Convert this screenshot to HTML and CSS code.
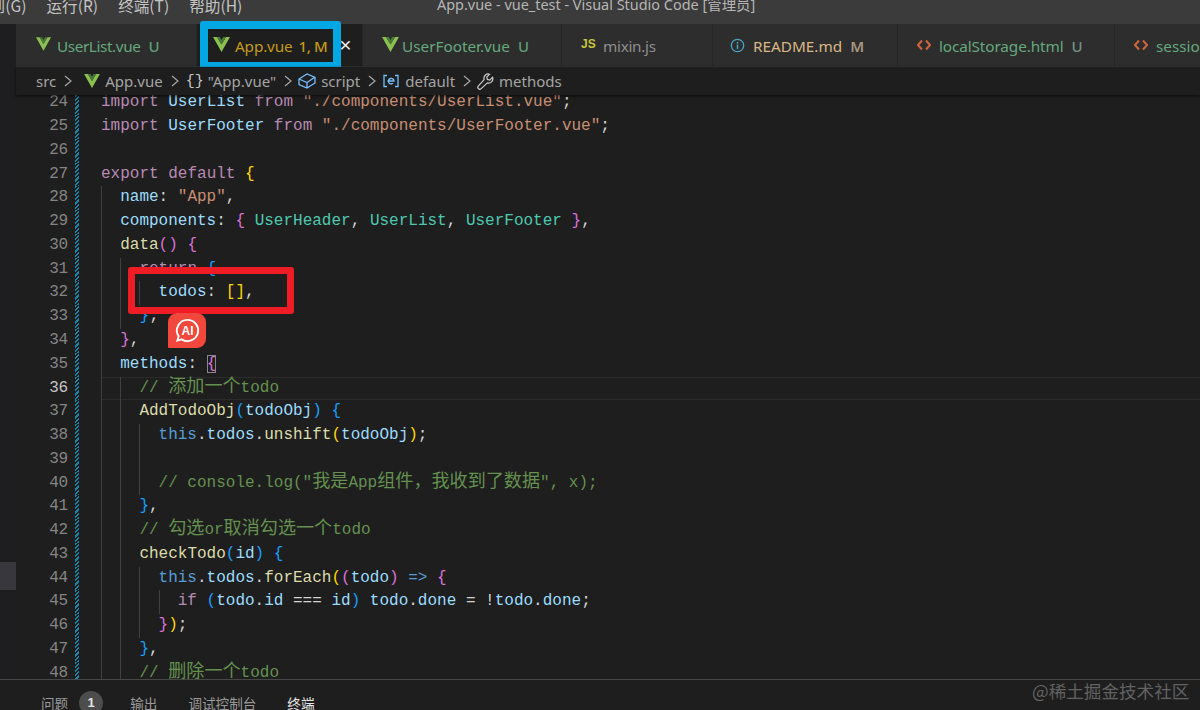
FILE: index.html
```html
<!DOCTYPE html>
<html lang="zh-CN">
<head>
<meta charset="utf-8">
<title>App.vue - vue_test</title>
<link rel="stylesheet" href="styles.css">
</head>
<body>
<svg class="defs" width="0" height="0" aria-hidden="true"><defs>
<symbol id="vue" viewBox="0 0 18 16"><path d="M0 0h4.2L9 8l4.8-8H18L9 16z" fill="#8cc152"/><path d="M4.2 0h3L9 3.2 10.8 0h3L9 8z" fill="#4c7a3a"/></symbol>
</defs></svg>
<header class="titlebar">
  <nav class="menu"><span>转到(G)</span><span>运行(R)</span><span>终端(T)</span><span>帮助(H)</span></nav>
  <div class="wintitle">App.vue - vue_test - Visual Studio Code [管理员]</div>
</header>
<div class="workbench">
  <aside class="activity"><div class="activity-item"></div></aside>
  <div class="center">
    <div class="tabs">
      <div class="tab t1"><svg class="ic-vue"><use href="#vue"/></svg><span class="lb green">UserList.vue</span><span class="st green-d">U</span></div>
      <div class="tab t2 active"><svg class="ic-vue"><use href="#vue"/></svg><span class="lb amber">App.vue</span><span class="st amber">1, M</span><span class="close">×</span></div>
      <div class="tab t3"><svg class="ic-vue"><use href="#vue"/></svg><span class="lb green">UserFooter.vue</span><span class="st green-d">U</span></div>
      <div class="tab t4"><span class="ic-js">JS</span><span class="lb grey">mixin.js</span></div>
      <div class="tab t5"><svg class="ic-info" viewBox="0 0 16 16"><circle cx="8" cy="8" r="6.6" fill="none" stroke="#4aa3c7" stroke-width="1.4"/><path d="M8 4.2v1.6M8 7v4.8" stroke="#4aa3c7" stroke-width="1.6"/></svg><span class="lb tan">README.md</span><span class="st tan-d">M</span></div>
      <div class="tab t6"><svg class="ic-code" viewBox="0 0 14 12"><path d="M5 1.5 1 6l4 4.5M9 1.5 13 6l-4 4.5" fill="none" stroke="#d0643a" stroke-width="2"/></svg><span class="lb green">localStorage.html</span><span class="st green-g">U</span></div>
      <div class="tab t7"><svg class="ic-code" viewBox="0 0 14 12"><path d="M5 1.5 1 6l4 4.5M9 1.5 13 6l-4 4.5" fill="none" stroke="#d0643a" stroke-width="2"/></svg><span class="lb green">sessionStorage.html</span></div>
    </div>
    <div class="crumbs">
      <span>src</span><svg class="chev" viewBox="0 0 8 12"><path d="M1 1l6 5-6 5" fill="none" stroke="#a8a8a8" stroke-width="1.2"/></svg>
      <svg class="ic-vue cv"><use href="#vue"/></svg><span>App.vue</span><svg class="chev" viewBox="0 0 8 12"><path d="M1 1l6 5-6 5" fill="none" stroke="#a8a8a8" stroke-width="1.2"/></svg>
      <span class="braces">{}</span><span>"App.vue"</span><svg class="chev" viewBox="0 0 8 12"><path d="M1 1l6 5-6 5" fill="none" stroke="#a8a8a8" stroke-width="1.2"/></svg>
      <svg class="ic-cube" viewBox="0 0 18 16"><path d="M1 6l8-5 8 3.500v5.500l-8 5-8-3.500zM1 6l8 3.500 8-5.500M9 9.500V15" fill="none" stroke="#75beff" stroke-width="1.300"/></svg><span>script</span><svg class="chev" viewBox="0 0 8 12"><path d="M1 1l6 5-6 5" fill="none" stroke="#a8a8a8" stroke-width="1.2"/></svg>
      <svg class="ic-var" viewBox="0 0 16 14"><path d="M4 1.500H1v11h3M12 1.500h3v11h-3" fill="none" stroke="#75beff" stroke-width="1.300"/><path d="M4.500 7h6.500a2.800 2.800 0 1 0-1 2.300" fill="none" stroke="#75beff" stroke-width="1.400"/></svg><span>default</span><svg class="chev" viewBox="0 0 8 12"><path d="M1 1l6 5-6 5" fill="none" stroke="#a8a8a8" stroke-width="1.2"/></svg>
      <svg class="ic-wrench" viewBox="0 0 18 18"><path d="M16.500 4.500l-3 3-2.500-.7-.7-2.500 3-3a4.500 4.500 0 0 0-5.700 5.700L1.500 13.600a2 2 0 0 0 2.900 2.900l6.600-6.100a4.500 4.500 0 0 0 5.500-5.900z" fill="none" stroke="#c8c8c8" stroke-width="1.300"/></svg><span>methods</span>
    </div>
    <main class="editor">
      <div class="lines">
        <div class="line"><span class="num">24</span><span class="diff"></span><code class="code"><span class="k">import</span> <span class="v">UserList</span> <span class="k">from</span> <span class="s">"./components/UserList.vue"</span><span class="p">;</span></code></div>
        <div class="line"><span class="num">25</span><span class="diff"></span><code class="code"><span class="k">import</span> <span class="v">UserFooter</span> <span class="k">from</span> <span class="s">"./components/UserFooter.vue"</span><span class="p">;</span></code></div>
        <div class="line"><span class="num">26</span><span class="diff"></span><code class="code"></code></div>
        <div class="line"><span class="num">27</span><span class="diff"></span><code class="code"><span class="k">export</span> <span class="k">default</span> <span class="by">{</span></code></div>
        <div class="line"><span class="num">28</span><span class="diff"></span><code class="code"><i class="g"></i><span class="v">name</span><span class="p">:</span> <span class="s">"App"</span><span class="p">,</span></code></div>
        <div class="line"><span class="num">29</span><span class="diff"></span><code class="code"><i class="g"></i><span class="v">components</span><span class="p">:</span> <span class="bp">{</span> <span class="c">UserHeader</span><span class="p">,</span> <span class="c">UserList</span><span class="p">,</span> <span class="c">UserFooter</span> <span class="bp">}</span><span class="p">,</span></code></div>
        <div class="line"><span class="num">30</span><span class="diff"></span><code class="code"><i class="g"></i><span class="f">data</span><span class="bp">()</span> <span class="bp">{</span></code></div>
        <div class="line"><span class="num">31</span><span class="diff"></span><code class="code"><i class="g"></i><i class="g"></i><span class="k">return</span> <span class="bb">{</span></code></div>
        <div class="line"><span class="num">32</span><span class="diff"></span><code class="code"><i class="g"></i><i class="g"></i><i class="g"></i><span class="v">todos</span><span class="p">:</span> <span class="by">[]</span><span class="p">,</span></code></div>
        <div class="line"><span class="num">33</span><span class="diff"></span><code class="code"><i class="g"></i><i class="g"></i><span class="bb">}</span><span class="p">;</span></code></div>
        <div class="line"><span class="num">34</span><span class="diff"></span><code class="code"><i class="g"></i><span class="bp">}</span><span class="p">,</span></code></div>
        <div class="line"><span class="num">35</span><span class="diff"></span><code class="code"><i class="g"></i><span class="v">methods</span><span class="p">:</span> <span class="bp match">{</span></code></div>
        <div class="line current"><span class="num">36</span><span class="diff"></span><code class="code"><i class="g"></i><i class="g"></i><span class="m">// <span class="cjk">添加一个</span>todo</span></code></div>
        <div class="line"><span class="num">37</span><span class="diff"></span><code class="code"><i class="g"></i><i class="g"></i><span class="f">AddTodoObj</span><span class="bb">(</span><span class="v">todoObj</span><span class="bb">)</span> <span class="bb">{</span></code></div>
        <div class="line"><span class="num">38</span><span class="diff"></span><code class="code"><i class="g"></i><i class="g"></i><i class="g"></i><span class="t">this</span><span class="p">.</span><span class="v">todos</span><span class="p">.</span><span class="f">unshift</span><span class="by">(</span><span class="v">todoObj</span><span class="by">)</span><span class="p">;</span></code></div>
        <div class="line"><span class="num">39</span><span class="diff"></span><code class="code"><i class="g"></i><i class="g"></i><i class="g"></i></code></div>
        <div class="line"><span class="num">40</span><span class="diff"></span><code class="code"><i class="g"></i><i class="g"></i><i class="g"></i><span class="m">// console.log("<span class="cjk">我是</span>App<span class="cjk">组件，我收到了数据</span>", x);</span></code></div>
        <div class="line"><span class="num">41</span><span class="diff"></span><code class="code"><i class="g"></i><i class="g"></i><span class="bb">}</span><span class="p">,</span></code></div>
        <div class="line"><span class="num">42</span><span class="diff"></span><code class="code"><i class="g"></i><i class="g"></i><span class="m">// <span class="cjk">勾选</span>or<span class="cjk">取消勾选一个</span>todo</span></code></div>
        <div class="line"><span class="num">43</span><span class="diff"></span><code class="code"><i class="g"></i><i class="g"></i><span class="f">checkTodo</span><span class="bb">(</span><span class="v">id</span><span class="bb">)</span> <span class="bb">{</span></code></div>
        <div class="line"><span class="num">44</span><span class="diff"></span><code class="code"><i class="g"></i><i class="g"></i><i class="g"></i><span class="t">this</span><span class="p">.</span><span class="v">todos</span><span class="p">.</span><span class="f">forEach</span><span class="by">(</span><span class="bp">(</span><span class="v">todo</span><span class="bp">)</span> <span class="t">=&gt;</span> <span class="bp">{</span></code></div>
        <div class="line"><span class="num">45</span><span class="diff"></span><code class="code"><i class="g"></i><i class="g"></i><i class="g"></i><i class="g"></i><span class="k">if</span> <span class="bb">(</span><span class="v">todo</span><span class="p">.</span><span class="v">id</span> <span class="p">===</span> <span class="v">id</span><span class="bb">)</span> <span class="v">todo</span><span class="p">.</span><span class="v">done</span> <span class="p">=</span> <span class="p">!</span><span class="v">todo</span><span class="p">.</span><span class="v">done</span><span class="p">;</span></code></div>
        <div class="line"><span class="num">46</span><span class="diff"></span><code class="code"><i class="g"></i><i class="g"></i><i class="g"></i><span class="bp">}</span><span class="by">)</span><span class="p">;</span></code></div>
        <div class="line"><span class="num">47</span><span class="diff"></span><code class="code"><i class="g"></i><i class="g"></i><span class="bb">}</span><span class="p">,</span></code></div>
        <div class="line"><span class="num">48</span><span class="diff"></span><code class="code"><i class="g"></i><i class="g"></i><span class="m">// <span class="cjk">删除一个</span>todo</span></code></div>
      </div>
    </main>
  </div>
</div>
<footer class="panel">
  <span class="ptab">问题</span><span class="badge">1</span><span class="ptab">输出</span><span class="ptab">调试控制台</span><span class="ptab on">终端</span>
</footer>
<div class="mark-blue"></div>
<div class="mark-red"></div>
<div class="ai-badge"><svg viewBox="0 0 28 28"><path d="M14 3a11 11 0 1 1-6 20.200L3.500 24.500l1.300-4.500A11 11 0 0 1 14 3z" fill="none" stroke="#fff" stroke-width="2"/><text x="14" y="18.500" class="ai-text">AI</text></svg></div>
<div class="watermark">@稀土掘金技术社区</div>
</body>
</html>
```
FILE: styles.css
```css
* { box-sizing: border-box; }
html, body { margin: 0; height: 710px; overflow: hidden; background: #1e1e1e; }
body { display: flex; flex-direction: column; font-family: "Noto Sans", "Noto Sans CJK SC", sans-serif; color: #ccc; position: relative; }
.defs { position: absolute; }

.titlebar { height: 24px; flex: none; background: #3b3b3b; position: relative; overflow: hidden; color: #c4c4c4; }
.menu { display: flex; gap: 20px; margin-left: -26px; margin-top: -5px; line-height: 20px; font-size: 15.6px; font-family: "Noto Sans CJK SC", sans-serif; }
.wintitle { position: absolute; left: 437px; top: -5px; line-height: 20px; white-space: nowrap; font-size: 14.45px; color: #b6b6b6; font-family: "Noto Sans", "Noto Sans CJK SC", sans-serif; }

.workbench { flex: 1; min-height: 0; display: flex; }
.activity { width: 16px; flex: none; background: #1e1e20; padding-top: 538px; }
.activity-item { height: 28px; background: #37373d; }
.center { flex: 1; min-width: 0; display: flex; flex-direction: column; }

.tabs { height: 43px; flex: none; display: flex; background: #2c2c2c; border-bottom: 1px solid #333; font-size: 15.3px; overflow: hidden; }
.tab { height: 42px; flex: none; display: flex; align-items: center; padding-top: 2px; border-right: 1px solid #262626; white-space: nowrap; background: #2d2d2d; }
.t1 { width: 181px; padding-left: 20px; }
.t1 .lb { letter-spacing: -0.4px; }
.t2 { width: 166px; padding-left: 16px; background: #1e1e1e; }
.t2 .lb { letter-spacing: -0.15px; }
.t3 { width: 199px; padding-left: 19px; }
.t4 { width: 151px; padding-left: 19px; }
.t4 .lb { letter-spacing: -0.3px; }
.t5 { width: 185px; padding-left: 17px; }
.t6 { width: 217px; padding-left: 19px; }
.t6 .lb { letter-spacing: -0.1px; }
.t7 { width: 200px; padding-left: 19px; }
.ic-vue { width: 15px; height: 14px; margin-right: 6px; flex: none; margin-top: -4px; }
.t2 .ic-vue { width: 17px; height: 15px; margin-right: 5px; }
.t3 .ic-vue { width: 17px; height: 15px; margin-right: 3px; }
.ic-js { font: bold 12px "Liberation Sans", sans-serif; color: #c8c43c; width: 22px; margin-top: -4px; }
.ic-info { width: 15px; height: 15px; margin-right: 8px; margin-top: -2px; }
.ic-code { width: 14px; height: 12px; margin-right: 8px; margin-top: -2px; }
.lb { line-height: 20px; }
.st { margin-left: 8px; font-size: 15px; font-weight: 500; }
.t2 .st { margin-left: 6px; letter-spacing: -0.4px; }
.green { color: #66a97e; }
.green-d { color: #5f9e76; }
.green-g { color: #748f82; }
.amber { color: #c29a17; }
.grey { color: #8f8f8f; }
.tan { color: #d9b787; }
.tan-d { color: #a6977f; font-weight: 600; }
.close { color: #f0f0f0; font-size: 21px; margin-left: 12px; margin-top: -3px; font-family: "Liberation Sans", sans-serif; }

.crumbs { height: 28px; flex: none; display: flex; align-items: center; padding-left: 20px; font-size: 15px; color: #a5a5a5; background: #1e1e1e; box-shadow: 0 1px 3px rgba(0, 0, 0, 0.7); position: relative; z-index: 2; white-space: nowrap; }
.chev { width: 8px; height: 12px; margin: 0 7px 0 8px; flex: none; }
.cv { width: 16px; margin: 0 5px 0 5px; }
.braces { margin-right: 7px; color: #c8c8c8; font-family: "Liberation Mono", monospace; font-size: 15px; width: 15px; }
.ic-cube { width: 18px; height: 16px; margin-right: 5px; margin-left: -1px; }
.ic-var { width: 16px; height: 14px; margin-right: 6px; }
.ic-wrench { width: 17px; height: 17px; margin-right: 5px; margin-left: -1px; }

.editor { flex: 1; min-height: 0; overflow: hidden; background: #1e1e1e; }
.lines { margin-top: -3.7px; font: 16px "Liberation Mono", "DejaVu Sans Mono", monospace; }
.line { height: 23.78px; display: flex; align-items: stretch; line-height: 23.78px; }
.num { width: 52px; flex: none; text-align: right; color: #858585; font-family: "Liberation Mono", monospace; letter-spacing: -0.2px; }
.diff { width: 4px; margin-left: 7px; flex: none; background: repeating-linear-gradient(135deg, #1b85ad 0 1.5px, #1e1e1e 1.5px 3px); }
.code { margin-left: 22px; flex: 1; display: block; white-space: pre; font: inherit; color: #d4d4d4; }
.current .num { color: #c6c6c6; }
.current .code { box-shadow: inset 0 1px 0 #2b2b2b, inset 0 -1px 0 #2b2b2b; }
.g { display: inline-block; width: 19.2px; height: 23.78px; vertical-align: top; border-left: 1px solid #404040; }
.k { color: #b98ab5; }
.v { color: #9cdcfe; }
.s { color: #c98e72; }
.p { color: #d4d4d4; }
.c { color: #4ec9b0; }
.f { color: #dcdcaa; }
.t { color: #569cd6; }
.m { color: #64914f; }
.cjk { font-family: "Noto Sans CJK SC", sans-serif; font-size: 18.1px; line-height: 0; }
.by { color: #ffd700; }
.bp { color: #da70d6; }
.bb { color: #179fff; }
.match { outline: 1px solid #888; outline-offset: -1px; }

.panel { height: 31px; flex: none; display: flex; align-items: center; padding: 15px 0 0 41px; background: #1e1e1e; border-top: 1px solid #474747; font-family: "Noto Sans CJK SC", sans-serif; font-size: 13.6px; color: #9a9a9a; overflow: hidden; }
.ptab { margin-right: 31px; white-space: nowrap; }
.ptab.on { color: #e6e6e6; }
.badge { width: 24px; height: 24px; margin: 0 27px 0 -20px; flex: none; border-radius: 50%; background: #4d4d4d; color: #e4e4e4; text-align: center; font: bold 13px/24px "Liberation Sans", sans-serif; }

.mark-blue { position: absolute; left: 200px; top: 21px; width: 141px; height: 49px; border: 8px solid #02a7e3; border-radius: 3px; }
.mark-red { position: absolute; left: 128px; top: 267px; width: 166px; height: 47px; border: 7.5px solid #ee1c25; border-radius: 3px; }
.ai-badge { position: absolute; left: 168px; top: 313px; width: 38px; height: 35px; background: #f1473c; border-radius: 9px 9px 9px 1px; display: flex; align-items: center; justify-content: center; }
.ai-badge svg { width: 27px; height: 27px; }
.ai-text { font: bold 12.5px "Liberation Sans", sans-serif; fill: #fff; text-anchor: middle; }
.watermark { position: absolute; left: 1032px; top: 680px; line-height: 22px; font-family: "Noto Sans CJK SC", sans-serif; font-size: 17.6px; color: #626262; white-space: nowrap; }
```
